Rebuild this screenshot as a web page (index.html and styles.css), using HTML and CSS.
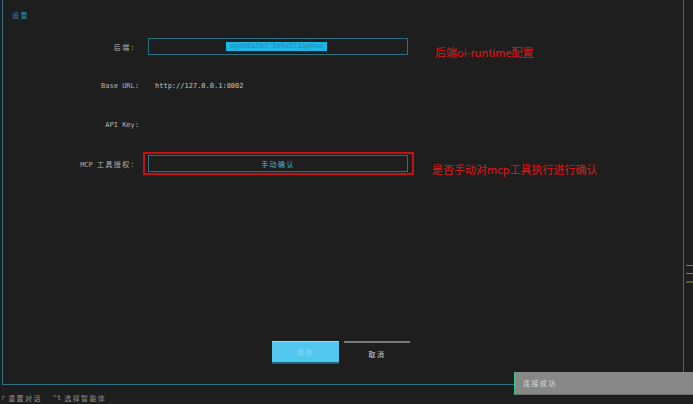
FILE: index.html
```html
<!DOCTYPE html>
<html lang="zh">
<head>
<meta charset="utf-8">
<title>设置</title>
<link rel="stylesheet" href="styles.css">
</head>
<body>
<div class="screen">
  <div class="frame">
    <div class="title">设置</div>
    <div class="form">
      <div class="row">
        <div class="label cjk">后端：</div>
        <div class="input"><span class="sel">openEuler Intelligence</span></div>
      </div>
      <div class="row">
        <div class="label">Base URL:</div>
        <div class="value">http://127.0.0.1:8002</div>
      </div>
      <div class="row">
        <div class="label">API Key:</div>
        <div class="value"></div>
      </div>
      <div class="row">
        <div class="label">MCP <span class="cjk">工具授权：</span></div>
        <div class="btn-wrap">
          <div class="toggle cjk">手动确认</div>
          <div class="redbox"></div>
        </div>
      </div>
    </div>
    <div class="actions">
      <div class="btn save cjk">保存</div>
      <div class="btn cancel cjk">取消</div>
    </div>
  </div>
  <div class="status"><span>r</span><span class="cjk">重置对话</span><span class="key">^t</span><span class="cjk">选择智能体</span></div>
  <div class="note note1">后端oi-runtime配置</div>
  <div class="note note2">是否手动对mcp工具执行进行确认</div>
  <div class="toast"><span class="cjk">连接成功</span></div>
  <div class="edge">
    <i class="e1"></i><i class="e2"></i><i class="e3"></i>
  </div>
</div>
</body>
</html>
```
FILE: styles.css
```css
html, body {
  margin: 0;
  padding: 0;
  background: #1e1e1e;
}
body {
  font-family: "DejaVu Sans Mono", "Noto Sans CJK SC", monospace;
  font-size: 7px;
  color: #b8b8b8;
}
.screen {
  position: relative;
  width: 693px;
  height: 404px;
  overflow: hidden;
  background: #1e1e1e;
}
.cjk {
  font-family: "Noto Sans CJK SC", sans-serif;
  letter-spacing: 1.4px;
}
.frame {
  box-sizing: border-box;
  margin-left: 2px;
  width: 682px;
  height: 385px;
  border: 1px solid #2d7088;
  border-top: none;
  display: flex;
  flex-direction: column;
}
.title {
  font-family: "Noto Sans CJK SC", sans-serif;
  letter-spacing: 1.4px;
  color: #2a90b8;
  padding: 11px 0 0 9px;
  line-height: 9px;
  height: 9px;
}
.form {
  margin-top: 18px;
  display: flex;
  flex-direction: column;
  gap: 22px;
}
.row {
  display: grid;
  grid-template-columns: 136px 260px;
  column-gap: 9px;
  height: 17px;
  align-items: center;
}
.label {
  text-align: right;
  color: #b4b4b4;
  white-space: nowrap;
}
.value {
  padding-left: 7px;
  color: #c4c4c4;
}
.input {
  box-sizing: border-box;
  height: 17px;
  border: 1px solid #2b6f82;
  display: flex;
  align-items: center;
  justify-content: center;
}
.sel {
  background: #1db4e6;
  color: #2a86ac;
  padding: 0 4px;
  line-height: 9px;
  margin-left: -3px;
}
.btn-wrap {
  position: relative;
  height: 17px;
}
.toggle {
  box-sizing: border-box;
  height: 17px;
  border: 1px solid #2b6f82;
  display: flex;
  align-items: center;
  justify-content: center;
  color: #4cb8dc;
}
.redbox {
  position: absolute;
  left: -5px;
  right: -6px;
  top: -3px;
  bottom: -3px;
  border: 2px solid #c41212;
  box-sizing: border-box;
}
.actions {
  margin-top: auto;
  display: flex;
  justify-content: center;
  gap: 5px;
  padding: 0 4px 20px 0;
}
.btn {
  box-sizing: border-box;
  height: 23px;
  display: flex;
  align-items: center;
  justify-content: center;
}
.save {
  width: 67px;
  background: #52c8ee;
  border-top: 1px solid #9adcf4;
  border-bottom: 2px solid #1a6482;
  color: #92d8f2;
}
.cancel {
  width: 66px;
  border-top: 2px solid #7c7c7c;
  color: #d4d4d4;
}
.status {
  display: flex;
  align-items: center;
  height: 19px;
  padding: 7px 0 0 1px;
  box-sizing: border-box;
  color: #909090;
  gap: 3px;
}
.status .key {
  margin-left: 8px;
}
.note {
  position: absolute;
  font-family: "Noto Sans CJK SC", sans-serif;
  font-size: 11px;
  line-height: 14px;
  color: #e01616;
  white-space: nowrap;
}
.note1 {
  left: 435px;
  top: 45px;
}
.note2 {
  left: 432px;
  top: 162px;
}
.toast {
  position: absolute;
  left: 514px;
  top: 372px;
  width: 180px;
  height: 23px;
  box-sizing: border-box;
  background: #888888;
  border-left: 2px solid #2ec27e;
  border-bottom: 1px solid #6a6a6a;
  display: flex;
  align-items: center;
  padding-left: 7px;
  color: #dadada;
}
.edge {
  position: absolute;
  left: 686px;
  top: 265px;
  width: 7px;
  display: flex;
  flex-direction: column;
  gap: 7px;
}
.edge i {
  display: block;
  height: 1px;
  background: #7a7a7a;
}
.edge .e3 {
  height: 2px;
  background: #5a5a2e;
}
```
